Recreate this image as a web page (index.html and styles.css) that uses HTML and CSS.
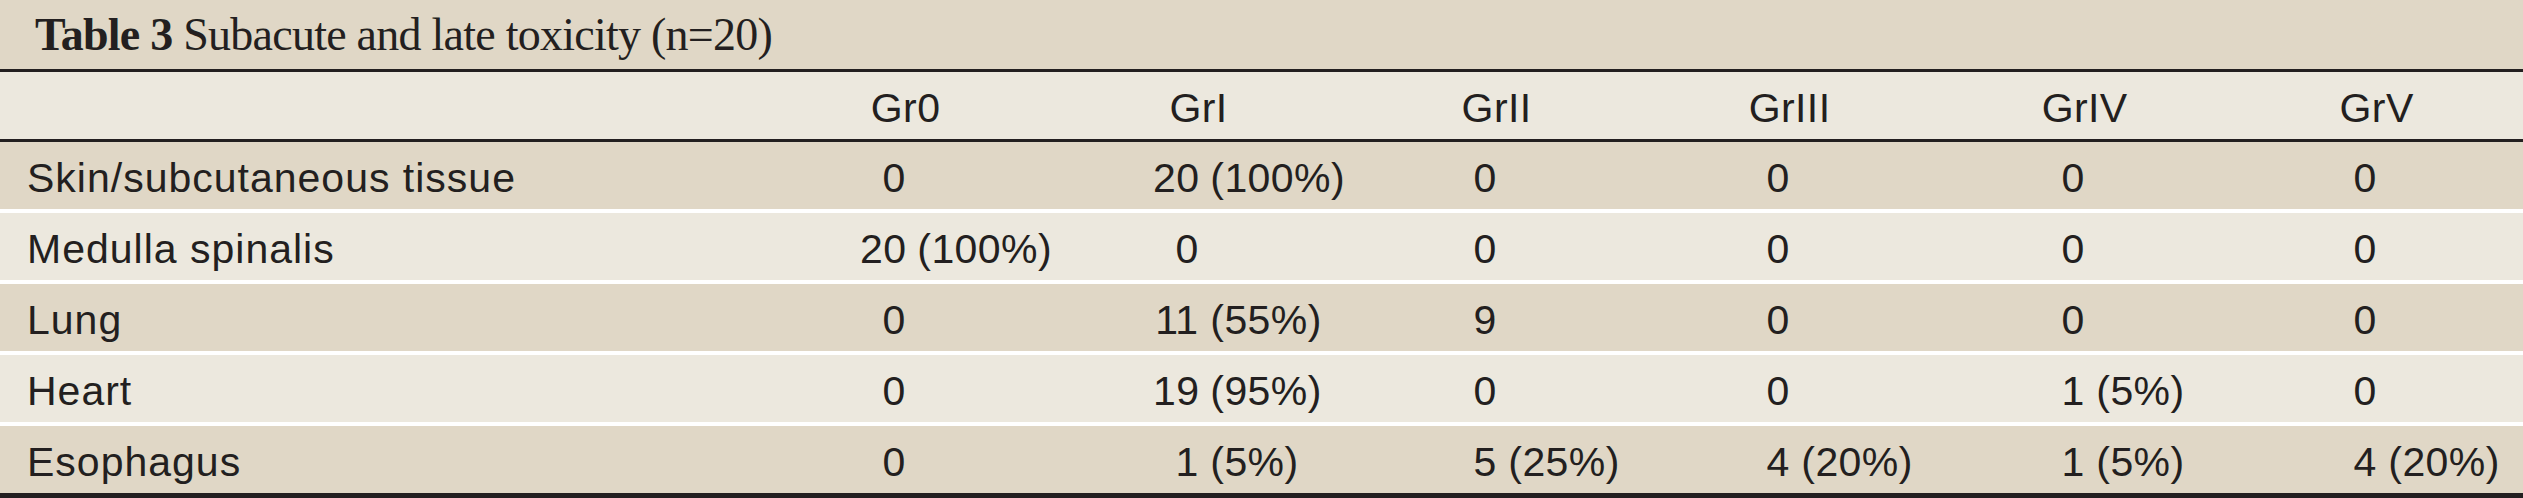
FILE: index.html
```html
<!DOCTYPE html>
<html lang="en">
<head>
<meta charset="utf-8">
<title>Table 3 Subacute and late toxicity</title>
<link rel="stylesheet" href="styles.css">
</head>
<body>
<div class="table">
  <div class="caption"><b>Table 3</b>&nbsp;Subacute and late toxicity (n=20)</div>
  <div class="row head">
    <div class="cell label"></div>
    <div class="cell"><span class="h">Gr0</span></div>
    <div class="cell"><span class="h">GrI</span></div>
    <div class="cell"><span class="h">GrII</span></div>
    <div class="cell"><span class="h">GrIII</span></div>
    <div class="cell"><span class="h">GrIV</span></div>
    <div class="cell"><span class="h">GrV</span></div>
  </div>
  <div class="body">
    <div class="row odd">
      <div class="cell label">Skin/subcutaneous tissue</div>
      <div class="cell"><span class="n">0</span></div>
      <div class="cell"><span class="n">20</span> (100%)</div>
      <div class="cell"><span class="n">0</span></div>
      <div class="cell"><span class="n">0</span></div>
      <div class="cell"><span class="n">0</span></div>
      <div class="cell"><span class="n">0</span></div>
    </div>
    <div class="row even">
      <div class="cell label">Medulla spinalis</div>
      <div class="cell"><span class="n">20</span> (100%)</div>
      <div class="cell"><span class="n">0</span></div>
      <div class="cell"><span class="n">0</span></div>
      <div class="cell"><span class="n">0</span></div>
      <div class="cell"><span class="n">0</span></div>
      <div class="cell"><span class="n">0</span></div>
    </div>
    <div class="row odd">
      <div class="cell label">Lung</div>
      <div class="cell"><span class="n">0</span></div>
      <div class="cell"><span class="n">11</span> (55%)</div>
      <div class="cell"><span class="n">9</span></div>
      <div class="cell"><span class="n">0</span></div>
      <div class="cell"><span class="n">0</span></div>
      <div class="cell"><span class="n">0</span></div>
    </div>
    <div class="row even">
      <div class="cell label">Heart</div>
      <div class="cell"><span class="n">0</span></div>
      <div class="cell"><span class="n">19</span> (95%)</div>
      <div class="cell"><span class="n">0</span></div>
      <div class="cell"><span class="n">0</span></div>
      <div class="cell"><span class="n">1</span> (5%)</div>
      <div class="cell"><span class="n">0</span></div>
    </div>
    <div class="row odd">
      <div class="cell label">Esophagus</div>
      <div class="cell"><span class="n">0</span></div>
      <div class="cell"><span class="n">1</span> (5%)</div>
      <div class="cell"><span class="n">5</span> (25%)</div>
      <div class="cell"><span class="n">4</span> (20%)</div>
      <div class="cell"><span class="n">1</span> (5%)</div>
      <div class="cell"><span class="n">4</span> (20%)</div>
    </div>
  </div>
</div>
</body>
</html>
```

FILE: styles.css
```css
html, body {
  margin: 0;
  padding: 0;
}

body {
  background: #e0d7c6;
}

.table {
  width: 2523px;
  font-family: "Liberation Sans", Arial, sans-serif;
  font-size: 41px;
  letter-spacing: 0.4px;
  color: #231f20;
}

.caption {
  box-sizing: border-box;
  height: 72px;
  display: flex;
  align-items: center;
  padding-left: 35px;
  font-family: "Liberation Serif", "Times New Roman", serif;
  font-size: 46px;
  letter-spacing: -0.75px;
  background: #e0d7c6;
  border-bottom: 3px solid #231f20;
  white-space: nowrap;
}

.caption b {
  font-weight: 700;
}

.row {
  display: grid;
  grid-template-columns: 860px 293px 298px 293px 295px 292px 1fr;
  height: 67px;
  align-items: center;
}

.head {
  box-sizing: border-box;
  height: 70px;
  background: #ece8de;
  border-bottom: 3px solid #231f20;
}

.body {
  display: flex;
  flex-direction: column;
  gap: 4px;
  background: #ffffff;
  border-bottom: 5px solid #231f20;
}

.odd {
  background: #e0d7c6;
}

.even {
  background: #ece8de;
}

.cell {
  padding-top: 6px;
  white-space: nowrap;
}

.label {
  padding-left: 27px;
  letter-spacing: 1px;
}

.n {
  display: inline-block;
  width: 1.112em;
  text-align: right;
}

.h {
  display: inline-block;
  width: 2.224em;
  text-align: center;
}
```
